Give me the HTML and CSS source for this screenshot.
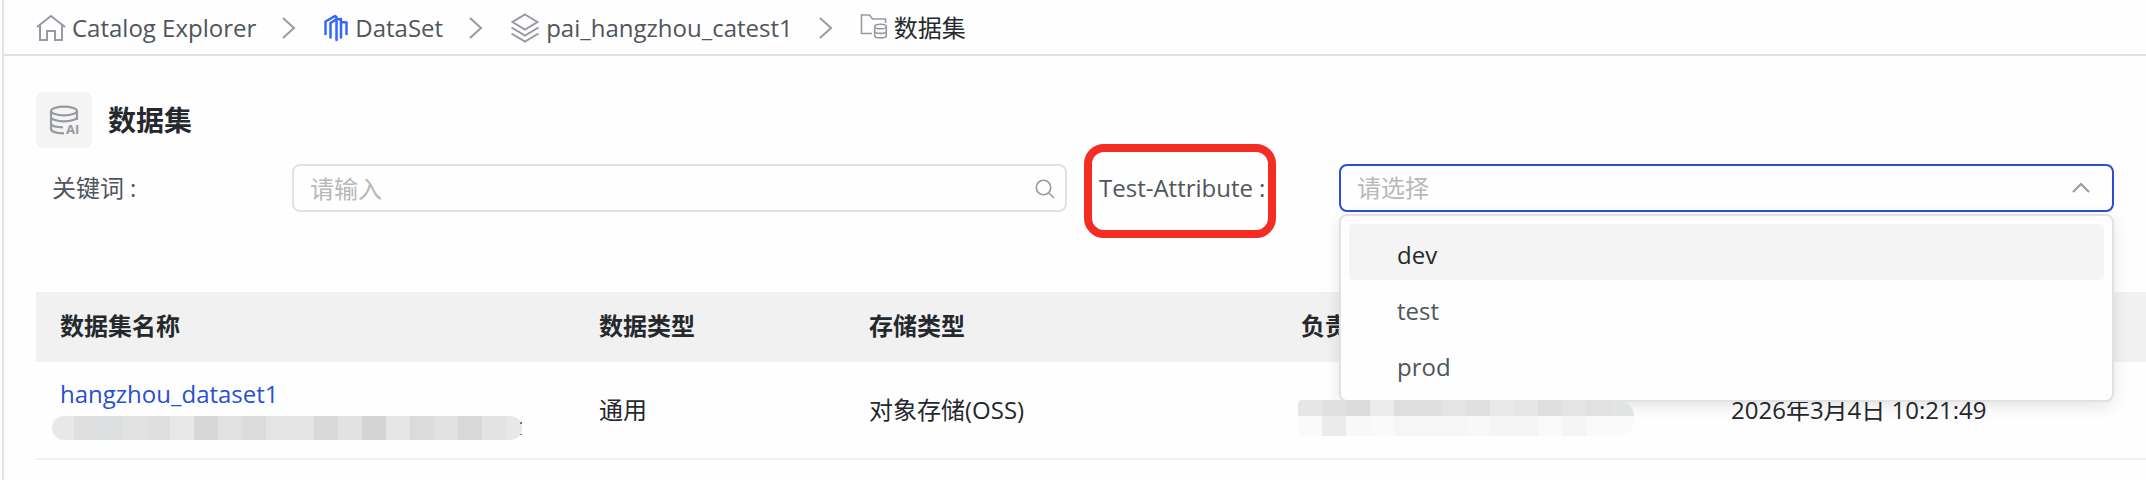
FILE: index.html
```html
<!DOCTYPE html>
<html lang="zh-CN">
<head>
<meta charset="utf-8">
<title>数据集</title>
<link rel="stylesheet" href="styles.css">
</head>
<body>
<div class="page">
  <nav class="breadcrumb" aria-label="breadcrumb">
    <a class="crumb" href="#">
      <svg class="crumb-icon" width="30" height="30" viewBox="0 0 30 30" fill="none" stroke="#979aa3" stroke-width="2"><path d="M1 14 15 3l14 11M4 12v15h7v-9h8v9h7V12"/></svg>
      <span>Catalog Explorer</span>
    </a>
    <svg class="sep" width="14" height="22" viewBox="0 0 14 22" fill="none" stroke="#979aa3" stroke-width="2"><path d="m1 1 11 10L1 21"/></svg>
    <a class="crumb" href="#">
      <svg class="crumb-icon" width="26" height="30" viewBox="0 0 26 30" fill="none" stroke="#3466ff" stroke-width="2.500" stroke-linejoin="round" stroke-linecap="round"><path d="M2.500 21V8.500L12 3l1.500 1V27M7.500 24.500V10L13 6.500l5-.5v18.500M18.500 9l5 .5V21"/></svg>
      <span>DataSet</span>
    </a>
    <svg class="sep" width="14" height="22" viewBox="0 0 14 22" fill="none" stroke="#979aa3" stroke-width="2"><path d="m1 1 11 10L1 21"/></svg>
    <a class="crumb" href="#">
      <svg class="crumb-icon" width="30" height="30" viewBox="0 0 30 30" fill="none" stroke="#979aa3" stroke-width="2"><path d="m15 1.500 12.500 7.500L15 16.500 2.500 9zM1.500 14.500 15 22.500l13.500-8M1.500 20.500 15 28.500l13.500-8"/></svg>
      <span>pai_hangzhou_catest1</span>
    </a>
    <svg class="sep" width="14" height="22" viewBox="0 0 14 22" fill="none" stroke="#979aa3" stroke-width="2"><path d="m1 1 11 10L1 21"/></svg>
    <span class="crumb current" aria-current="page">
      <svg class="crumb-icon" width="28" height="30" viewBox="0 0 28 30" fill="none" stroke="#979aa3" stroke-width="1.600"><path d="M12 20.500H1.500V2h8l3 4h13v4"/><ellipse cx="20.500" cy="13.500" rx="5.800" ry="2.300"/><path d="M14.700 13.500v9c0 1.300 2.600 2.400 5.800 2.400s5.800-1.100 5.800-2.400v-9M14.700 18c0 1.300 2.600 2.400 5.800 2.400s5.800-1.100 5.800-2.400"/></svg>
      <span>数据集</span>
    </span>
  </nav>

  <main>
    <header class="title">
      <span class="title-icon">
        <svg width="32" height="32" viewBox="0 0 32 32" fill="none" stroke="#979aa3" stroke-width="2.200"><ellipse cx="16" cy="7" rx="13" ry="4.300"/><path d="M3 7v18c0 2.300 5 4.200 13 4.400M29 7v9M3 13c0 2.400 5.800 4.300 13 4.300S29 15.400 29 13M3 19.500c0 2.200 5 3.800 12 3.900"/><text class="icon-text" x="18" y="30">AI</text></svg>
      </span>
      <h1>数据集</h1>
    </header>

    <form class="filters">
      <label class="label" for="keyword">关键词<span class="colon">:</span></label>
      <div class="control">
        <input class="field" id="keyword" type="text" placeholder="请输入">
        <svg class="search" width="20" height="20" viewBox="0 0 20 20" fill="none" stroke="#979aa3" stroke-width="1.600"><circle cx="8.500" cy="8.500" r="7.200"/><path d="m13.500 13.500 5.500 5.500"/></svg>
      </div>
      <div class="label marked">
        <label for="attribute">Test-Attribute<span class="colon">:</span></label>
      </div>
      <div class="control">
        <select class="field open" id="attribute">
          <option value="" selected>请选择</option>
          <option>dev</option>
          <option>test</option>
          <option>prod</option>
        </select>
        <svg class="caret" width="18" height="12" viewBox="0 0 18 12" fill="none" stroke="#979aa3" stroke-width="2"><path d="m1 10 8-8 8 8"/></svg>
        <ul class="menu" role="listbox" aria-label="Test-Attribute">
          <li class="option active" role="option" aria-selected="true">dev</li>
          <li class="option" role="option">test</li>
          <li class="option" role="option">prod</li>
        </ul>
      </div>
    </form>

    <table class="datasets">
      <colgroup><col class="c-name"><col class="c-type"><col class="c-storage"><col class="c-owner"><col></colgroup>
      <thead>
        <tr><th>数据集名称</th><th>数据类型</th><th>存储类型</th><th>负责人</th><th></th></tr>
      </thead>
      <tbody>
        <tr>
          <td><a class="name" href="#">hangzhou_dataset1</a><div class="mask-id"></div></td>
          <td>通用</td>
          <td>对象存储(OSS)</td>
          <td><div class="mask-owner"></div></td>
          <td>2026年3月4日 10:21:49</td>
        </tr>
      </tbody>
    </table>
  </main>
</div>
</body>
</html>
```
FILE: styles.css
```css
*, *::before, *::after { box-sizing: border-box; }

body {
  margin: 0;
  padding-left: 2px;
  background: #fefefe;
  color: #25282d;
  font: 24px/32px "Open Sans", "Noto Sans CJK SC", sans-serif;
}

.page {
  min-height: 100vh;
  border-left: 2px solid #e2e2e2;
  overflow: hidden;
}

.breadcrumb {
  display: flex;
  align-items: center;
  height: 56px;
  padding: 2px 32px 0;
  border-bottom: 2px solid #e2e2e2;
}

.crumb {
  display: flex;
  align-items: center;
  gap: 6px;
  color: #50555c;
  text-decoration: none;
}

.crumb.current { color: #25282d; }
.sep { margin: 0 27px 0 26px; }

main { padding: 36px 0 20px 32px; }

.title {
  display: flex;
  align-items: center;
  gap: 16px;
  margin-bottom: 16px;
}

.title-icon {
  display: grid;
  place-items: center;
  width: 56px;
  height: 56px;
  border-radius: 8px;
  background: #f4f4f4;
}

.title-icon svg { overflow: visible; }

.icon-text {
  fill: #979aa3;
  stroke: none;
  font-size: 13px;
  font-weight: 700;
}

h1 {
  margin: 0;
  font-size: 28px;
  line-height: 40px;
  font-weight: 700;
}

.filters {
  display: grid;
  grid-template-columns: 240px 1fr 272px 1fr;
  align-items: center;
  margin-bottom: 80px;
  padding: 0 32px 0 16px;
}

.label { color: #50555c; }
.colon { margin-left: 6px; }

.marked {
  position: relative;
  padding-left: 32px;
}

.marked::after {
  content: "";
  position: absolute;
  left: 17px;
  top: -28px;
  width: 192px;
  height: 94px;
  border: 8px solid #f32c24;
  border-radius: 20px;
  pointer-events: none;
}

.control { position: relative; }

.field {
  display: block;
  width: 100%;
  height: 48px;
  padding: 0 48px 0 16px;
  border: 2px solid #e2e2e2;
  border-radius: 8px;
  outline: 0;
  appearance: none;
  background: #fefefe;
  color: #b8b8b8;
  font: inherit;
}

.field::placeholder { color: #b8b8b8; opacity: 1; }
.field.open { border-color: #2850d2; }

.search {
  position: absolute;
  right: 12px;
  top: 15px;
}

.caret {
  position: absolute;
  right: 24px;
  top: 18px;
}

.menu {
  position: absolute;
  z-index: 1;
  top: 50px;
  left: 0;
  right: 0;
  margin: 0;
  padding: 8px;
  border: 2px solid #e2e2e2;
  border-radius: 8px;
  background: #fefefe;
  box-shadow: 0 4px 16px rgba(0, 0, 0, 0.1);
  list-style: none;
}

.option {
  padding: 15px 48px 9px;
  border-radius: 4px;
  color: #50555c;
}

.option.active {
  background: #f4f4f4;
  color: #25282d;
}

.datasets {
  width: 100%;
  border-spacing: 0;
  table-layout: fixed;
}

.c-name { width: 539px; }
.c-type { width: 270px; }
.c-storage { width: 432px; }
.c-owner { width: 430px; }

th, td {
  padding: 0 24px;
  text-align: left;
  white-space: nowrap;
}

th {
  height: 70px;
  padding-bottom: 2px;
  background: #f1f1f1;
  font-weight: 700;
}

td {
  height: 98px;
  border-bottom: 2px solid #f0f0f0;
}

.name {
  display: block;
  margin-top: 16px;
  color: #2850d2;
  text-decoration: none;
}

.mask-id {
  position: relative;
  width: 470px;
  height: 24px;
  margin: 6px 0 18px -8px;
  border-radius: 12px;
  background: linear-gradient(90deg,
    #e8e8e8 0 22px, #dfdfdf 0 46px, #dcdfdf 0 70px, #e1e1e1 0 94px,
    #dfdfdf 0 118px, #e7e7e7 0 142px, #d7d7d7 0 166px, #e1e1e1 0 190px,
    #dbdbdb 0 214px, #e4e4e4 0 262px, #d8d8d8 0 286px, #e2e2e2 0 310px,
    #d4d4d4 0 334px, #e6e6e6 0 358px, #dbdbdb 0 382px, #e1e1e1 0 406px,
    #d8d8d8 0 430px, #e3e3e3 0 454px, #e8e8e8 0);
}

.mask-id::after {
  content: "";
  position: absolute;
  top: 6px;
  right: 0;
  width: 2px;
  height: 13px;
  border: solid #777;
  border-width: 2px 0 1px;
}

.mask-owner {
  position: relative;
  z-index: 2;
  width: 336px;
  height: 36px;
  margin: 16px 0 0 -3px;
  border-radius: 4px 16px 16px 4px;
  background:
    linear-gradient(90deg,
      #e6e6e6 0 24px, #e0e0e0 0 48px, #dcdcdc 0 72px, #ececec 0 96px,
      #dfdfdf 0 144px, #e4e4e4 0 168px, #e0e0e0 0 192px, #e9e9e9 0 216px,
      #e6e6e6 0 240px, #dfdfdf 0 264px, #e4e4e4 0 288px, #e1e1e1 0 312px, #e1e4e3 0) top / 100% 16px no-repeat,
    linear-gradient(90deg,
      #fafafa 0 24px, #ebebeb 0 48px, #f8f8f8 0 72px, #fafafa 0 96px, #f6f6f6 0 168px,
      #f8f8f8 0 192px, #f5f5f5 0 240px, #fafafa 0 264px, #f5f5f5 0 288px, #fafafa 0) bottom / 100% 20px no-repeat;
}
```
